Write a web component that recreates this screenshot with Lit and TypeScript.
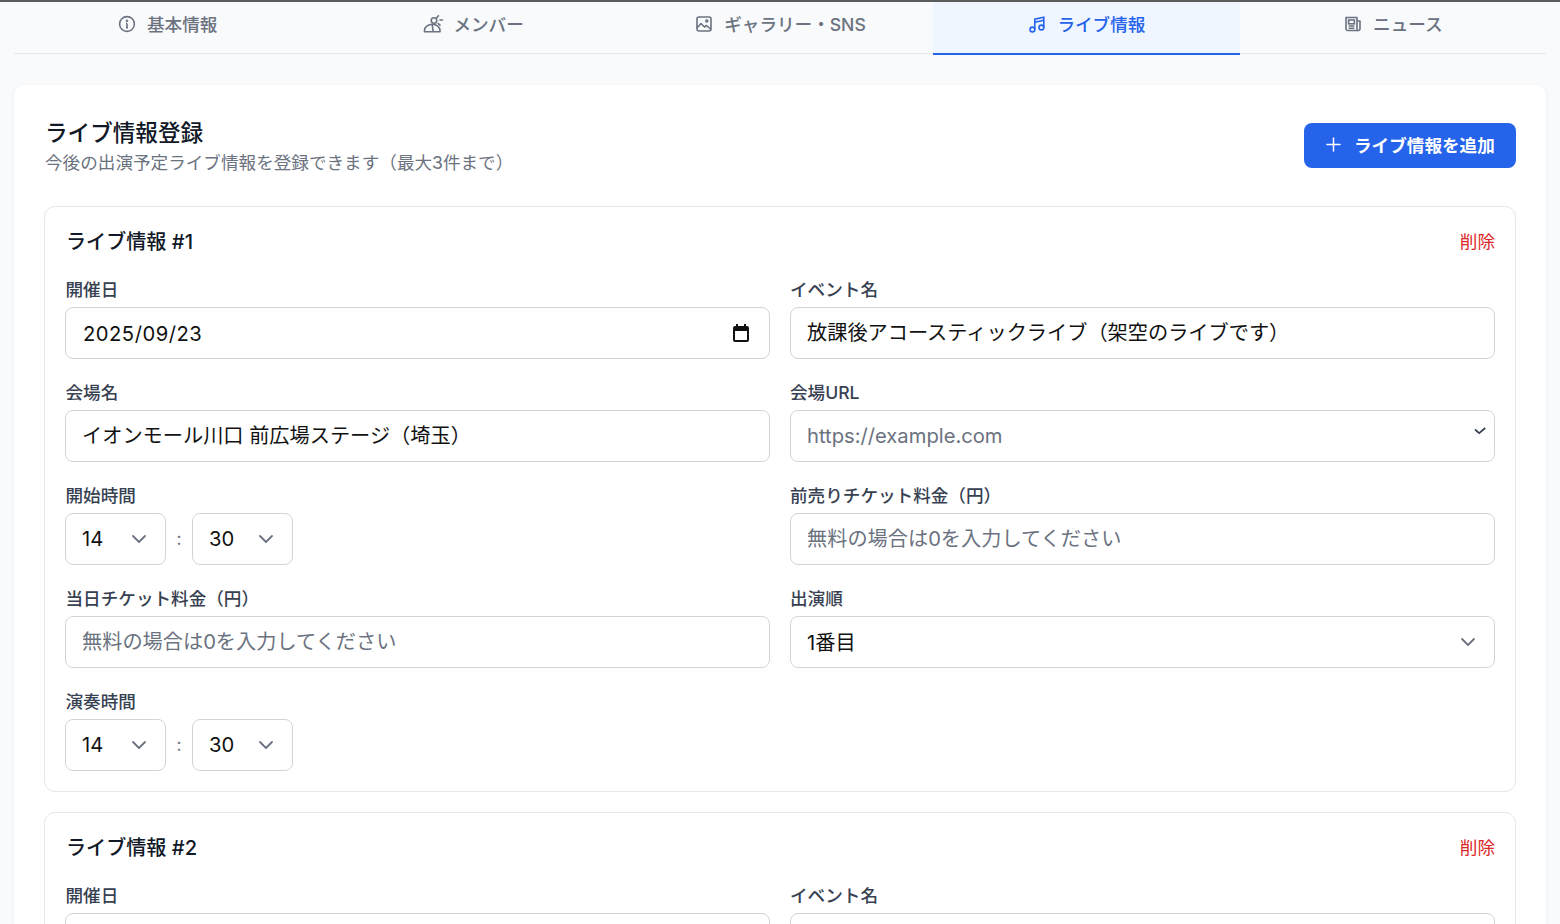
import { LitElement, html, css, svg } from 'lit';
import { customElement, property } from 'lit/decorators.js';

const FONT = css`Inter, "Noto Sans CJK JP", sans-serif`;

const chevron = html`<svg class="chev" viewBox="0 0 16 10" fill="none" stroke="currentColor" stroke-width="1.8" stroke-linecap="round" stroke-linejoin="round"><path d="M2 2l6 6 6-6"></path></svg>`;

@customElement('live-card')
export class LiveCard extends LitElement {
    @property({ type: Number }) no = 1;
    @property({ type: Boolean }) filled = false;

    _timeSelect() {
        return html`
            <div class="time">
                <div class="select small"><select><option>14</option></select>${chevron}</div>
                <span class="colon">:</span>
                <div class="select small"><select><option>30</option></select>${chevron}</div>
            </div>
        `;
    }

    render() {
        const f = this.filled;
        const ticket = '無料の場合は0を入力してください';
        return html`
            <div class="head">
                <h3>ライブ情報 #${this.no}</h3>
                <button class="del">削除</button>
            </div>
            <div class="grid">
                <div>
                    <label>開催日</label>
                    <div class="select">
                        <input class="date" .value=${f ? '2025/09/23' : ''} />
                        <svg class="cal" viewBox="0 0 16 18" fill="#111"><path d="M3 0h2v2h6V0h2v2h1a2 2 0 0 1 2 2v12a2 2 0 0 1-2 2H2a2 2 0 0 1-2-2V4a2 2 0 0 1 2-2h1zM2 7v9h12V7z"></path></svg>
                    </div>
                </div>
                <div>
                    <label>イベント名</label>
                    <input class="jp" .value=${f ? '放課後アコースティックライブ（架空のライブです）' : ''} />
                </div>
                <div>
                    <label>会場名</label>
                    <input class="jp" .value=${f ? 'イオンモール川口 前広場ステージ（埼玉）' : ''} />
                </div>
                <div>
                    <label>会場URL</label>
                    <div class="select">
                        <input placeholder="https://example.com" />
                        <svg class="tick" viewBox="0 0 12 8" fill="none" stroke="#374151" stroke-width="1.7"><path d="M1 2.5l4.2 3.7L11.2 1"></path></svg>
                    </div>
                </div>
                <div>
                    <label>開始時間</label>
                    ${this._timeSelect()}
                </div>
                <div>
                    <label>前売りチケット料金（円）</label>
                    <input placeholder=${ticket} />
                </div>
                <div>
                    <label>当日チケット料金（円）</label>
                    <input placeholder=${ticket} />
                </div>
                <div>
                    <label>出演順</label>
                    <div class="select"><select><option>1番目</option></select>${chevron}</div>
                </div>
                <div>
                    <label>演奏時間</label>
                    ${this._timeSelect()}
                </div>
            </div>
        `;
    }

    static styles = css`
        :host {
            display: block;
            box-sizing: border-box;
            border: 1px solid #e5e7eb;
            border-radius: 11px;
            padding: 20px;
            font-family: ${FONT};
        }
        .head {
            display: flex;
            justify-content: space-between;
            align-items: center;
            height: 27px;
            margin-bottom: 23px;
        }
        h3 {
            margin: 0;
            padding-left: 1px;
            font-size: 20.1px;
            font-weight: 500;
            color: #111827;
        }
        .del {
            border: none;
            background: none;
            padding: 0 0 1px;
            font: inherit;
            font-size: 17.6px;
            color: #dc2626;
        }
        .grid {
            display: grid;
            grid-template-columns: 1fr 1fr;
            column-gap: 20px;
            row-gap: 20.6px;
        }
        label {
            display: block;
            padding-left: 0.5px;
            font-size: 17.6px;
            line-height: 26.4px;
            font-weight: 500;
            color: #374151;
            margin-bottom: 3.4px;
        }
        .grid > div:nth-child(even) label {
            margin-left: -0.5px;
        }
        input, select {
            display: block;
            box-sizing: border-box;
            width: 100%;
            height: 52.6px;
            border: 1px solid #d1d5db;
            border-radius: 8px;
            background: #fff;
            padding: 0 16px;
            margin: 0;
            font-family: ${FONT};
            font-size: 20.2px;
            color: #111;
            outline: none;
            appearance: none;
            -webkit-appearance: none;
        }
        input {
            padding-bottom: 1px;
        }
        input::placeholder {
            color: #6b7280;
        }
        .date {
            padding-left: 17px;
            padding-bottom: 0;
            letter-spacing: 0.5px;
        }
        .jp {
            padding-bottom: 4px;
        }
        .select {
            position: relative;
        }
        .chev {
            position: absolute;
            right: 19px;
            top: 21px;
            width: 16px;
            height: 10px;
            color: #6b7280;
            pointer-events: none;
        }
        .cal {
            position: absolute;
            right: 21px;
            top: 17px;
            width: 16px;
            height: 18px;
        }
        .tick {
            position: absolute;
            right: 9px;
            top: 17px;
            width: 12px;
            height: 8px;
        }
        .time {
            display: flex;
            align-items: center;
        }
        .small {
            width: 101px;
        }
        .small select {
            padding-bottom: 1px;
        }
        .colon {
            width: 26px;
            padding-bottom: 2px;
            text-align: center;
            font-size: 17.6px;
            color: #6b7280;
        }
    `;
}

const icons = {
    info: svg`<circle cx="9" cy="9" r="7.4"></circle><path d="M9 8.4v4.2M8 8.4h1M8 12.6h2"></path><circle cx="9" cy="5.7" r=".5"></circle>`,
    member: svg`<circle cx="10" cy="5.5" r="2.8"></circle><path d="M14.5 .8l-1.8 2M16 5h2.5M14.2 8.6l1.8 1.6" stroke-linecap="round"></path><path d="M.5 16.8h15.5v-1.5a7.7 6 0 0 0-15.5 0zM8.2 10l1 6.8" stroke-linejoin="round"></path>`,
    image: svg`<rect x="2" y="2" width="14" height="14" rx="2"></rect><circle cx="11.8" cy="6" r="1"></circle><path d="M2 13l4-4.5 3.5 3.5 2-1.5 4.5 4" stroke-linejoin="round"></path>`,
    music: svg`<path d="M6.8 14.5V4.2l9-2v10.3"></path><path d="M6.8 7.2l9-2"></path><circle cx="4.4" cy="14.5" r="2.4"></circle><circle cx="13.4" cy="12.5" r="2.4"></circle>`,
    news: svg`<path d="M13 15.5H3.8A1.8 1.8 0 0 1 2 13.7V2.5h11v13zM13 6h3v7.7a1.8 1.8 0 0 1-3 1.4" stroke-linejoin="round"></path><rect x="4.6" y="5" width="5.8" height="3.8"></rect><path d="M4.6 11h5.8M4.6 13.2h5.8"></path>`,
};

const tabs = [
    { label: '基本情報', icon: icons.info },
    { label: 'メンバー', icon: icons.member },
    { label: 'ギャラリー・SNS', icon: icons.image },
    { label: 'ライブ情報', icon: icons.music, active: true },
    { label: 'ニュース', icon: icons.news },
];

@customElement('app-root')
export class AppRoot extends LitElement {
    render() {
        return html`
            <div class="tabs">
                ${tabs.map((t) => html`
                    <div class="tab ${t.active ? 'active' : ''}">
                        <svg viewBox="-1 0 18 18" fill="none" stroke="currentColor" stroke-width="1.6">${t.icon}</svg>
                        <span>${t.label}</span>
                    </div>
                `)}
            </div>
            <main class="card">
                <header>
                    <div class="intro">
                        <h2>ライブ情報登録</h2>
                        <p>今後の出演予定ライブ情報を登録できます（最大3件まで）</p>
                    </div>
                    <button class="add">
                        <svg viewBox="0 0 16 16" fill="none" stroke="currentColor" stroke-width="1.6" stroke-linecap="round"><path d="M8 1v14M1 8h14"></path></svg>
                        ライブ情報を追加
                    </button>
                </header>
                <div class="list">
                    <live-card no="1" filled></live-card>
                    <live-card no="2"></live-card>
                </div>
            </main>
        `;
    }

    static styles = css`
        :host {
            display: block;
            box-sizing: border-box;
            height: 924px;
            overflow: hidden;
            background: #f9fafb;
            border-top: 2px solid #5c5c5c;
            padding: 0 14px;
            font-family: ${FONT};
        }
        .tabs {
            display: grid;
            grid-template-columns: repeat(5, 1fr);
            height: 52px;
            box-sizing: border-box;
            border-bottom: 1px solid #e5e7eb;
        }
        .tab {
            display: flex;
            align-items: center;
            justify-content: center;
            gap: 12px;
            height: 51px;
            padding-bottom: 8px;
            box-sizing: border-box;
            font-size: 17.6px;
            font-weight: 500;
            color: #6b7280;
        }
        .tab svg {
            width: 18px;
            height: 18px;
            flex: none;
            overflow: visible;
        }
        .tab.active {
            height: 53px;
            padding-bottom: 8px;
            color: #2563eb;
            background: #eff6ff;
            border-bottom: 2px solid #2563eb;
        }
        .card {
            margin-top: 31px;
            padding: 30px;
            background: #fff;
            border-radius: 11px;
            box-shadow: 0 1px 4px rgba(0, 0, 0, 0.06);
        }
        header {
            display: flex;
            justify-content: space-between;
            align-items: center;
            height: 60px;
        }
        .intro {
            padding: 2px 0 0 1px;
        }
        h2 {
            margin: 0;
            font-size: 22.6px;
            line-height: 33px;
            font-weight: 500;
            color: #111827;
        }
        p {
            margin: 1px 0 0;
            font-size: 17.6px;
            line-height: 26px;
            color: #6b7280;
        }
        .add {
            display: flex;
            align-items: center;
            gap: 13px;
            width: 212px;
            height: 45px;
            box-sizing: border-box;
            padding: 0 20px 2px 22px;
            border: none;
            border-radius: 8px;
            background: #2563eb;
            color: #fff;
            font-family: ${FONT};
            font-size: 17.6px;
            font-weight: 600;
            white-space: nowrap;
        }
        .add svg {
            width: 15px;
            height: 15px;
            flex: none;
        }
        .list {
            display: flex;
            flex-direction: column;
            gap: 20px;
            margin-top: 31px;
        }
    `;
}
